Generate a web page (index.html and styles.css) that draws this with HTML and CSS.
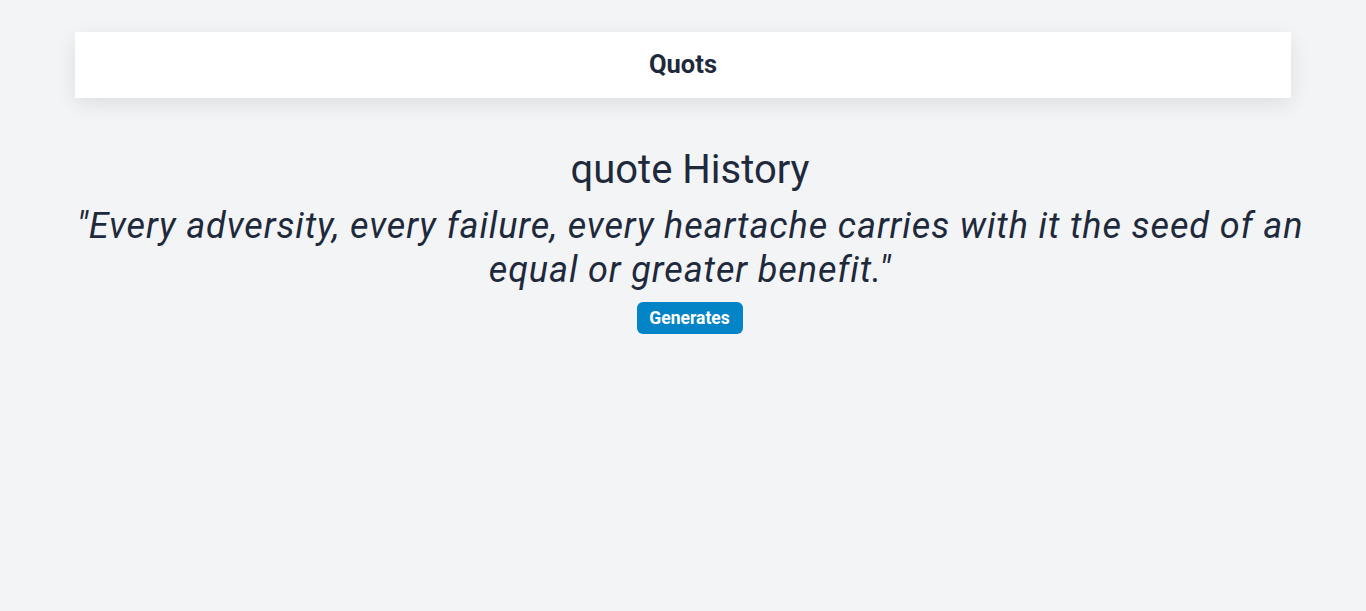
FILE: index.html
```html
<!DOCTYPE html>
<html lang="en">
<head>
<meta charset="utf-8">
<title>Quots</title>
<link rel="stylesheet" href="styles.css">
</head>
<body>
<header class="topbar">
  <h1 class="brand">Quots</h1>
</header>
<main class="content">
  <h2 class="title">quote History</h2>
  <p class="quote">"Every adversity, every failure, every heartache carries with it the seed of an equal or greater benefit."</p>
  <button class="btn" type="button">Generates</button>
</main>
</body>
</html>
```

FILE: styles.css
```css
html, body {
  margin: 0;
  padding: 0;
}
body {
  background: #f3f4f6;
  font-family: Roboto, "Liberation Sans", Arial, sans-serif;
  color: #1e293b;
  min-height: 611px;
}
.topbar {
  margin: 32px 75px 0;
  height: 66px;
  background: #ffffff;
  box-shadow: 0 6px 20px rgba(0,0,0,0.09);
  display: flex;
  align-items: center;
  justify-content: center;
}
.brand {
  margin: 0;
  font-size: 25.5px;
  line-height: 32px;
  font-weight: 700;
  transform: translateY(-1px);
}
.content {
  display: flex;
  flex-direction: column;
  align-items: center;
  text-align: center;
  padding: 0 52px 0 66px;
}
.title {
  margin: 50px 0 0;
  font-size: 40px;
  line-height: 44px;
  font-weight: 400;
}
.quote {
  margin: 12px 0 0;
  font-size: 36px;
  line-height: 44px;
  font-style: italic;
  letter-spacing: 0.025em;
}
.btn {
  margin-top: 10px;
  height: 32px;
  padding: 0 13px 0 12px;
  border: none;
  border-radius: 6px;
  background: #0284c7;
  color: #ffffff;
  font-family: inherit;
  font-size: 17.5px;
  font-weight: 700;
  cursor: pointer;
}
```
